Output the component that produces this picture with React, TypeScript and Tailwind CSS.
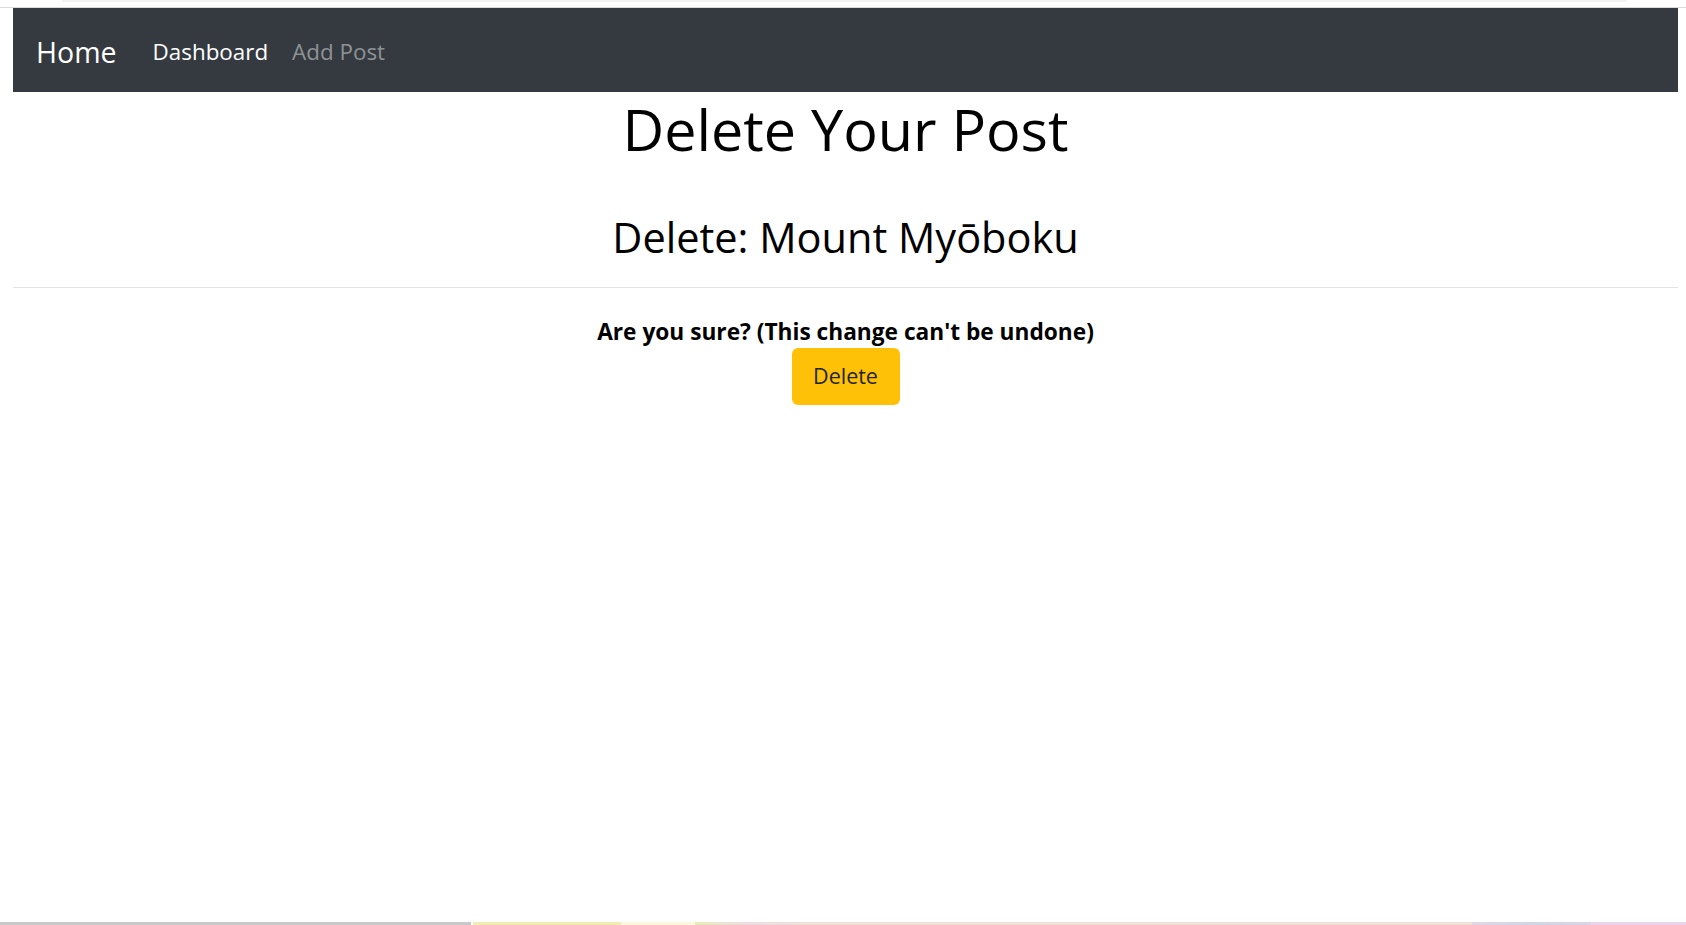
import React from "react";

const font = { fontFamily: '"Open Sans", "Noto Sans", sans-serif' };

export default function App() {
  return (
    <div className="flex min-h-screen flex-col bg-white text-black" style={font}>
      <div className="flex h-[7px] flex-col">
        <div className="ml-[62px] mr-[59px] h-[2px] bg-[#f3f3f3]" />
      </div>
      <div className="h-px bg-[#dadada]" />
      <div className="pl-[13px] pr-[8px]">
        <nav className="flex h-[84px] items-center bg-[#343a40] pl-[23px] pt-[4px]">
          <a className="text-[28.5px] leading-none text-white">Home</a>
          <div className="ml-[36px] flex items-center gap-[24px] text-[22.4px] leading-none">
            <a className="text-white">Dashboard</a>
            <a className="text-[#8f9295]">Add Post</a>
          </div>
        </nav>
        <main className="flex flex-col items-center">
          <h1 className="mt-[3px] text-[57.5px] font-medium leading-[1.2]">Delete Your Post</h1>
          <h2 className="mt-[49px] text-[41.5px] font-medium leading-[1.2]">Delete: Mount Myōboku</h2>
          <hr className="mt-[24px] w-full border-t border-[#e3e3e3]" />
          <p className="mt-[30px] text-[22.7px] font-bold leading-[1.2]">
            Are you sure? (This change can't be undone)
          </p>
          <button className="mt-[3px] h-[57px] w-[108px] rounded-[6px] bg-[#ffc107] text-[21.5px] text-[#212529]">
            Delete
          </button>
        </main>
      </div>
      <div className="mt-auto flex h-[3px]">
        <div className="w-[471px] bg-[#c8c8c8]" />
        <div className="w-[2px] bg-white" />
        <div className="w-[148px] bg-[#f2ebb2]" />
        <div className="w-[74px] bg-[#faf7dc]" />
        <div className="w-[105px] bg-gradient-to-r from-[#e6ecba] via-[#f0dce2] to-[#efdfdc]" />
        <div className="w-[672px] bg-[#f0e0d8]" />
        <div className="w-[119px] bg-gradient-to-r from-[#e2d8e4] via-[#d0d6e6] to-[#dcd4e8]" />
        <div className="flex-1 bg-[#ecd4ec]" />
      </div>
    </div>
  );
}
